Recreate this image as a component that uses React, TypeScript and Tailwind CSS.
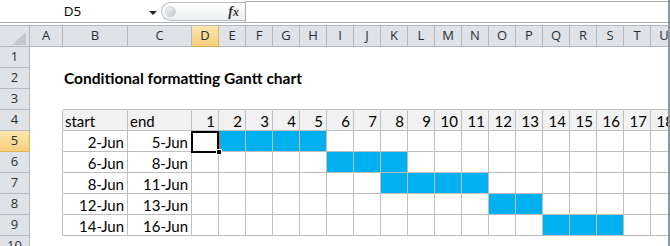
import React from "react";

const dayLetters = ["D", "E", "F", "G", "H", "I", "J", "K", "L", "M", "N", "O", "P", "Q", "R", "S", "T", "U"];

const tasks = [
  { row: 5, start: "2-Jun", end: "5-Jun", from: 2, to: 5 },
  { row: 6, start: "6-Jun", end: "8-Jun", from: 6, to: 8 },
  { row: 7, start: "8-Jun", end: "11-Jun", from: 8, to: 11 },
  { row: 8, start: "12-Jun", end: "13-Jun", from: 12, to: 13 },
  { row: 9, start: "14-Jun", end: "16-Jun", from: 14, to: 16 },
];

const cellFont = { fontFamily: "Lato, 'Liberation Sans', sans-serif" };

const HeaderCell = ({ w, label, active }: { w: string; label: string; active?: boolean }) => (
  <div
    className={`${w} shrink-0 h-full flex items-center justify-center border-r border-b text-[13px] text-[#2a2f36] ${
      active
        ? "bg-gradient-to-b from-[#fce6ad] to-[#f6cf7c] border-[#e2b257]"
        : "bg-[#dfe3e8] border-[#b3b9c0]"
    }`}
  >
    {label}
  </div>
);

const SheetCell = ({
  w,
  row,
  col,
  children,
  className = "",
}: {
  w: string;
  row: number;
  col: number;
  children?: React.ReactNode;
  className?: string;
}) => {
  const inTable = row >= 4 && row <= 9 && col >= 1;
  const right = inTable || (col === 0 && row >= 4 && row <= 9);
  const bottom = inTable || (row === 3 && col >= 1);
  return (
    <div
      className={`${w} shrink-0 h-full flex items-end border-r border-b leading-[18px] ${
        right ? "border-r-[#bfbfbf]" : "border-r-transparent"
      } ${bottom ? "border-b-[#bfbfbf]" : "border-b-transparent"} ${className}`}
    >
      {children}
    </div>
  );
};

const RowHead = ({ n }: { n: number }) => (
  <div
    className={`w-[30px] shrink-0 h-full flex items-center justify-center border-r border-b text-[13px] text-[#2a2f36] ${
      n === 5
        ? "bg-gradient-to-b from-[#fce6ad] to-[#f6cf7c] border-[#e2b257]"
        : "bg-[#dfe3e8] border-[#b3b9c0]"
    }`}
  >
    {n}
  </div>
);

const SheetRow = ({ n }: { n: number }) => {
  const task = tasks.find((t) => t.row === n);
  return (
    <div className="flex h-[21px]" style={cellFont}>
      <div style={{ fontFamily: "'Open Sans', sans-serif" }} className="flex h-full">
        <RowHead n={n} />
      </div>
      <SheetCell w="w-[33px]" row={n} col={0} />
      <SheetCell w="w-[65px]" row={n} col={1} className={`relative ${n === 4 ? "bg-[#f2f2f2] pl-[2px]" : "justify-end pr-[3px]"}`}>
        {n === 2 && (
          <span className="absolute left-[1px] bottom-[1px] whitespace-nowrap font-bold text-[15.5px] text-black z-10">
            Conditional formatting Gantt chart
          </span>
        )}
        {n === 4 && <span className="text-[15px] text-black">start</span>}
        {task && <span className="text-[15px] text-black">{task.start}</span>}
      </SheetCell>
      <SheetCell w="w-[64px]" row={n} col={2} className={n === 4 ? "bg-[#f2f2f2] pl-[2px]" : "justify-end pr-[3px]"}>
        {n === 4 && <span className="text-[15px] text-black">end</span>}
        {task && <span className="text-[15px] text-black">{task.end}</span>}
      </SheetCell>
      {dayLetters.map((l, i) => {
        const day = i + 1;
        const filled = task && day >= task.from && day <= task.to;
        return (
          <SheetCell
            key={l}
            w="w-[27px]"
            row={n}
            col={3 + i}
            className={`justify-end pr-[3px] ${n === 4 ? "bg-[#f2f2f2]" : ""} ${filled ? "bg-[#00b0f0]" : ""}`}
          >
            {n === 4 && <span className="text-[15px] text-black">{day}</span>}
          </SheetCell>
        );
      })}
    </div>
  );
};

export default function App() {
  return (
    <div className="relative w-[670px] h-[246px] overflow-hidden bg-white border-r-2 border-[#8e959c]">
      {/* formula bar */}
      <div className="h-[25px]">
        <div className="flex h-[23px] border-b border-[#a9aeb4]">
          <div className="relative w-[161px] shrink-0 flex items-center">
            <span className="w-[145px] text-center text-[13.5px] text-black" style={{ fontFamily: "'Open Sans', sans-serif" }}>
              D5
            </span>
            <span className="absolute left-[149px] top-[11px] w-0 h-0 border-l-[4px] border-r-[4px] border-t-[4px] border-l-transparent border-r-transparent border-t-[#222]" />
          </div>
          <div className="w-[84px] shrink-0 mt-[2px] h-[19px] rounded-l-full border border-r-0 border-[#b9bdc2] bg-gradient-to-b from-white to-[#eceef0] flex items-center justify-between pl-[3px] pr-[6px]">
            <span className="w-[11px] h-[11px] rounded-full bg-gradient-to-br from-[#f4f5f6] to-[#c3c7cc] border border-[#d1d4d8]" />
            <span className="text-[14px] italic font-bold text-[#333] leading-none" style={{ fontFamily: "'Liberation Serif', serif" }}>
              f<span className="text-[12px]">x</span>
            </span>
          </div>
          <div className="flex-1 mt-[1px] border-t border-l border-[#a9aeb4] bg-white" />
        </div>
      </div>

      {/* column headers */}
      <div className="flex h-[22px] border-t border-[#b3b9c0]" style={{ fontFamily: "'Open Sans', sans-serif" }}>
        <div className="relative w-[30px] shrink-0 h-full bg-[#dfe3e8] border-r border-b border-[#b3b9c0]">
          <svg className="absolute left-[12px] top-[6px]" width="14" height="13" viewBox="0 0 14 13">
            <polygon points="14,0 14,13 0,13" fill="#c4c8cd" />
          </svg>
        </div>
        <HeaderCell w="w-[33px]" label="A" />
        <HeaderCell w="w-[65px]" label="B" />
        <HeaderCell w="w-[64px]" label="C" />
        {dayLetters.map((l) => (
          <HeaderCell key={l} w="w-[27px]" label={l} active={l === "D"} />
        ))}
      </div>

      {/* rows */}
      {[1, 2, 3, 4, 5, 6, 7, 8, 9, 10].map((n) => (
        <SheetRow key={n} n={n} />
      ))}

      {/* active cell D5 */}
      <div className="absolute left-[191px] top-[131px] w-[28px] h-[22px] border-2 border-black" />
      <div className="absolute left-[219px] top-[132px] w-[1px] h-[18px] bg-[#e46c0a]" />
      <div className="absolute left-[216px] top-[149px] w-[6px] h-[6px] bg-black border border-white" />
    </div>
  );
}
